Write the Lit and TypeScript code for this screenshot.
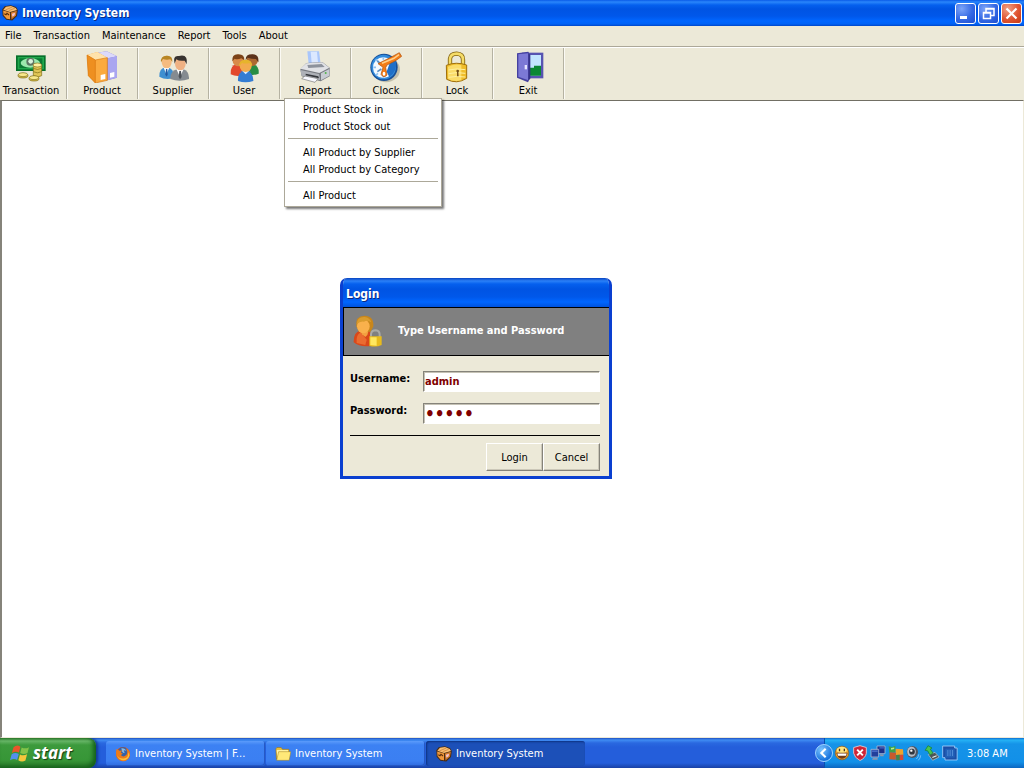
import { LitElement, html, svg, css, nothing } from "lit";
import { customElement, property } from "lit/decorators.js";

const icons: Record<string, unknown> = {
  crate: svg`
    <path d="M2 26 16 8 52 1 84 12 95 30 90 66 62 93 26 88 4 64Z" fill="#4a2c14"/>
    <path d="M8 28 24 11 54 6 82 18 90 30 48 42Z" fill="#f9bf72"/>
    <path d="M7 33 48 45 48 86 28 82 9 60Z" fill="#f0983a"/>
    <path d="M53 45 89 34 84 63 57 87Z" fill="#d07a2c"/>
    <path d="M20 30 62 12 M40 34 76 20" stroke="#c47a35" stroke-width="4"/>
    <path d="M14 52 24 58 30 50 42 60" stroke="#5a3010" stroke-width="7" fill="none"/>
    <path d="M60 52 78 46 76 62 62 70Z" fill="#f3c3cf"/>`,
  money: svg`
    <path d="M3 13H92V60H3Z" fill="#05702a"/>
    <path d="M8 18H87V55H8Z" fill="#20a84c"/>
    <path d="M13 22H82V51H13Z" fill="#0b7a34"/>
    <ellipse cx="46" cy="36" rx="29" ry="14" fill="#9be8ad"/>
    <circle cx="46" cy="32" r="12" fill="#5d7464"/><circle cx="47" cy="31" r="7" fill="#d9f2dc"/>
    <g stroke="#7c6b15" stroke-width="2">
      <path d="M55 42V74Q67 82 80 74V42Z" fill="#e0c555"/>
      <ellipse cx="67" cy="42" rx="13" ry="6" fill="#fff0a0"/>
      <path d="M55 52Q67 59 80 52M55 62Q67 69 80 62" fill="none"/>
      <ellipse cx="24" cy="74" rx="15" ry="7" fill="#dcc04c"/>
      <ellipse cx="24" cy="71" rx="14" ry="6" fill="#f8e88c"/>
      <ellipse cx="57" cy="83" rx="15" ry="7" fill="#dcc04c"/>
      <ellipse cx="57" cy="80" rx="14" ry="6" fill="#f8e88c"/>
    </g>`,
  boxes: svg`
    <path d="M34 5 62 1 93 16 93 80 64 88 40 60Z" fill="#7f78d2"/>
    <path d="M34 5 62 1 93 16 66 22Z" fill="#dcd9fb"/>
    <path d="M64 22 93 16V80L64 88Z" fill="#aaa6f0"/>
    <path d="M3 12 34 3 64 20V88L28 96 7 74Z" fill="#fbaa3f"/>
    <path d="M3 12 34 3 64 20 28 27Z" fill="#ffe2ab"/>
    <path d="M3 12 28 27V96L7 74Z" fill="#ee8f20"/>
    <path d="M3 12 28 27V96L7 74ZM28 27 64 20V88L28 96" fill="none" stroke="#d9780f" stroke-width="2"/>
    <path d="M44 72 58 69V84L44 87Z M72 66 85 63V77L72 80Z" fill="#fff"/>`,
  partners: svg`
    <path d="M7 77Q6 52 26 49Q45 50 49 65L46 82Q24 87 7 77Z" fill="#3f8fd0"/>
    <path d="M20 50 28 70 37 50Z" fill="#fff"/><path d="M27 54 31 54 32 72 28 77 25 70Z" fill="#2459a0"/>
    <ellipse cx="29" cy="33" rx="15" ry="19" fill="#f5bb80"/>
    <path d="M12 34Q10 13 30 14Q47 13 46 33L40 25Q28 28 18 24Z" fill="#b88625"/>
    <path d="M40 84Q39 60 62 54H78Q97 60 96 84Q68 94 40 84Z" fill="#858b91"/>
    <path d="M58 54 69 78 80 54Z" fill="#fff"/><path d="M67 60H72L74 78 69 85 65 77Z" fill="#4d5258"/>
    <ellipse cx="70" cy="38" rx="16" ry="20" fill="#efb183"/>
    <path d="M53 38Q46 12 66 15Q94 8 89 40L83 29Q66 31 58 25Z" fill="#37322f"/>`,
  people: svg`
    <path d="M8 70Q6 43 26 40Q48 41 48 71Q28 80 8 70Z" fill="#e2492d"/>
    <circle cx="31" cy="29" r="17" fill="#d88a49"/>
    <path d="M13 31Q11 8 32 10Q50 10 49 28L40 22Q28 27 20 23Z" fill="#7b4217"/>
    <path d="M52 68Q53 41 72 39Q94 42 92 68Q74 76 52 68Z" fill="#288d43"/>
    <circle cx="73" cy="28" r="17" fill="#ad6932"/>
    <path d="M53 28Q52 9 74 10Q94 10 91 34L84 24Q70 24 59 20Z" fill="#5b321a"/>
    <path d="M30 90Q28 62 52 58Q77 62 76 90Q52 98 30 90Z" fill="#347cd3"/>
    <path d="M43 60 53 70 63 60Z" fill="#d8eaff"/>
    <circle cx="53" cy="45" r="18" fill="#f2ab4e"/>
    <path d="M34 46Q32 25 54 26Q74 26 72 46L64 36Q50 40 42 35Z" fill="#e6b42c"/>`,
  printer: svg`
    <path d="M25 1H60L65 40H29Z" fill="#a9c6fb"/><path d="M35 2H54L57 36H38Z" fill="#dbe8ff"/>
    <path d="M4 55 22 36 70 33 92 50V76L65 91 8 76Z" fill="#777a80"/>
    <path d="M4 53 22 37 70 34 91 50 61 66Z" fill="#e1e2e6"/>
    <path d="M25 42 68 39 77 48 28 51Z" fill="#8d929c"/>
    <path d="M4 57 60 69 64 88 8 74Z" fill="#aeb1b8"/>
    <path d="M66 67 91 54V74L66 88Z" fill="#c8cbd2"/>
    <path d="M20 68 58 76 60 82 20 73Z" fill="#35373d"/>
    <path d="M18 75 57 83 48 94 8 83Z" fill="#f7f8ff" stroke="#777" stroke-width="2"/>
    <circle cx="80" cy="66" r="3" fill="#53b34b"/>`,
  clock: svg`
    <ellipse cx="48" cy="56" rx="42" ry="38" fill="#a5a18e" opacity=".6"/>
    <circle cx="42" cy="49" r="41" fill="#174f98"/>
    <circle cx="41" cy="48" r="37" fill="#328bdc"/>
    <circle cx="40" cy="50" r="31" fill="#f4f9ff"/>
    <path d="M60 34 78 30Q82 62 58 78L50 62Z" fill="#1f6fc8"/>
    <path d="M40 19V26M40 72V80M10 49H18M17 25 24 31M17 73 24 67" stroke="#8fc0f0" stroke-width="5"/>
    <path d="M22 30 36 42M22 62 34 54" fill="none" stroke="#5990c5" stroke-width="5"/>
    <path d="M24 38 64 18 88 5 95 16 77 29 51 42 47 50 51 72Q41 83 33 70L39 49Z" fill="#f47c16" stroke="#ad4e09" stroke-width="2"/>
    <path d="M36 37 72 22 87 11" fill="none" stroke="#ffd08a" stroke-width="5"/>
    <ellipse cx="42" cy="68" rx="4" ry="6" fill="#fff"/>`,
  lock: svg`
    <path d="M27 44V23Q29 8 47 8Q66 9 66 26V43" fill="none" stroke="#80600e" stroke-width="13"/>
    <path d="M27 44V23Q29 8 47 8Q66 9 66 26V43" fill="none" stroke="#f5dc68" stroke-width="8"/>
    <path d="M16 43Q45 31 77 42V82Q47 101 17 85Z" fill="#efbd2b" stroke="#a0700b" stroke-width="3"/>
    <path d="M21 47Q45 37 61 43V88Q37 94 21 83Z" fill="#fbdc69"/>
    <path d="M23 57Q46 51 73 56M23 68Q46 62 73 67M23 79Q46 74 73 78" fill="none" stroke="#fff0a0" stroke-width="3"/>
    <circle cx="50" cy="60" r="4" fill="#765016"/><path d="M48 62H52L53 76H48Z" fill="#765016"/>`,
  door: svg`
    <path d="M30 5H94V82H30Z" fill="#5754b1"/><path d="M38 12H87V74H38Z" fill="#c2e5ff"/>
    <path d="M50 50H66V44H87V74H50Z" fill="#0b8734"/>
    <path d="M15 7 49 2 54 12V82L48 94 15 80Z" fill="#4541a0"/>
    <path d="M19 10 49 7V88L19 77Z" fill="#7c79d6"/>
    <path d="M49 7 55 12V83L49 88Z" fill="#35328a"/>
    <path d="M38 42H45V55H38Z" fill="#e5e4ff"/>`,
  userlock: svg`
    <path d="M5 82Q4 50 26 47H50Q62 52 60 92Q24 98 5 82Z" fill="#d9481a"/>
    <path d="M14 84Q11 60 26 52L44 74 40 90Z" fill="#ea6c30"/>
    <path d="M24 46H50L46 60 40 66 30 58Z" fill="#f3a141"/>
    <path d="M13 34Q9 3 37 2Q66 2 64 34L56 50 22 50Z" fill="#c8861b"/>
    <ellipse cx="34" cy="34" rx="19" ry="21" fill="#f9b14c"/>
    <path d="M14 28Q15 5 38 6Q54 8 58 22Q46 14 36 20Q24 18 14 28Z" fill="#d99c2e"/>
    <path d="M57 66V57Q59 46 71 46Q83 47 83 59V67" fill="none" stroke="#a9aaa6" stroke-width="6"/>
    <path d="M52 64H89V90Q70 98 52 92Z" fill="#e8bb1c"/><path d="M55 67H74V92L55 90Z" fill="#ffe75e"/>`,
  firefox: svg`
    <circle cx="48" cy="48" r="42" fill="#d74e13"/><circle cx="48" cy="38" r="30" fill="#3261a9"/>
    <path d="M38 14Q61 12 69 32Q59 23 52 28L59 39Q49 45 43 35Z" fill="#89b9e1"/>
    <path d="M8 18 28 28 44 27 34 39 47 47 35 54Q49 72 69 53Q80 37 65 14Q94 28 90 55Q80 92 45 91Q6 83 6 45Z" fill="#ed7b1b"/>
    <path d="M10 54Q30 83 58 73Q82 69 79 38Q95 58 75 77Q36 103 10 54Z" fill="#f9c13e"/>`,
  folder: svg`
    <path d="M5 17 12 9H37L45 20H84V78H9Z" fill="#e8bd3c" stroke="#8f6b15" stroke-width="3"/>
    <path d="M10 24H79V72H14Z" fill="#fff2a1"/>
    <path d="M22 34H95L85 86H10Z" fill="#ffe878" stroke="#a37f1b" stroke-width="3"/>`,
  windows: svg`
    <path d="M17 20Q34 6 50 18L43 46Q27 36 9 48Z" fill="#e9552b"/>
    <path d="M56 21Q73 31 91 20L84 48Q67 57 49 48Z" fill="#83c34a"/>
    <path d="M8 54Q25 43 42 53L34 82Q19 72 0 83Z" fill="#5290ee"/>
    <path d="M48 55Q64 64 82 54L74 84Q57 94 40 83Z" fill="#f4c63c"/>`,
  chevron: svg`<path d="M58 22 32 48 58 74" fill="none" stroke="#fff" stroke-width="13"/>`,
  smile: svg`
    <circle cx="48" cy="48" r="41" fill="#f3a529" stroke="#8c561b" stroke-width="4"/>
    <ellipse cx="47" cy="30" rx="31" ry="19" fill="#ffe680"/>
    <path d="M33 22V38M62 22V38" stroke="#4d3213" stroke-width="8"/>
    <path d="M14 47H82Q76 82 48 83Q20 82 14 47Z" fill="#713c19"/><path d="M20 51H76L72 64H24Z" fill="#fff"/>`,
  shield: svg`
    <path d="M48 4 86 15V50Q80 79 48 93Q15 77 10 49V15Z" fill="#cf2537" stroke="#ead3d5" stroke-width="5"/>
    <path d="M31 28 65 62M65 28 31 62" stroke="#fff" stroke-width="12"/>`,
  network: svg`
    <g stroke="#a9b9d4" stroke-width="5"><path d="M42 6H90V52H42Z" fill="#1d2f86"/><path d="M6 26H52V72H6Z" fill="#22409c"/></g>
    <path d="M18 76H46V88H12Z" fill="#8c98b0"/><path d="M58 56H82V68H62Z" fill="#8c98b0"/>
    <path d="M12 32H46V42H12Z" fill="#4668c4"/><path d="M56 12H84V22H56Z" fill="#3d56b4"/>`,
  blocks: svg`
    <path d="M4 8 26 12 44 4 46 44 8 46Z" fill="#3ca249"/><path d="M46 22 90 26 92 58 46 60Z" fill="#efa22b"/>
    <path d="M10 44 48 46 46 88 8 86Z" fill="#c85a2c"/><path d="M48 60 92 58V90L50 92Z" fill="#d74932"/>
    <path d="M48 60 70 59V90L50 92Z" fill="#3a8a50"/><path d="M18 18 37 15V24L19 28Z" fill="#b8e98c"/>`,
  speaker: svg`
    <ellipse cx="38" cy="42" rx="34" ry="36" fill="#4f5661"/><ellipse cx="33" cy="40" rx="26" ry="30" fill="#b6bcc6"/>
    <circle cx="36" cy="40" r="17" fill="#30363f"/><circle cx="32" cy="34" r="7" fill="#fff"/>
    <path d="M76 56Q76 73 62 84M88 62Q87 80 74 92" fill="none" stroke="#8cc8f8" stroke-width="5"/>`,
  eject: svg`
    <path d="M26 58 66 44 91 72 52 92Z" fill="#4c5558" stroke="#c2c9cf" stroke-width="4"/>
    <path d="M7 32 24 4 48 18 38 25 54 48 36 60 22 35Z" fill="#48c551" stroke="#167c2b" stroke-width="4"/>
    <path d="M50 75 76 64" stroke="#e9eef1" stroke-width="7"/>`,
  chip: svg`
    <path d="M4 6H76V18H91V90H18V76H4Z" fill="#1b4fa6" stroke="#a5d0fb" stroke-width="5"/>
    <path d="M20 22H76V76H20Z" fill="#2260b8"/>
    <path d="M32 36H66M32 48H66M32 60H66" stroke="#8fc8ff" stroke-width="5" stroke-dasharray="6 8"/>`,
};

@customElement("app-icon")
class AppIcon extends LitElement {
  @property() name = "";
  static styles = css`
    :host { display: block; width: 16px; height: 16px; flex: none; }
    svg { display: block; width: 100%; height: 100%; }
  `;
  render() {
    return html`<svg viewBox="0 0 96 96" aria-hidden="true">${icons[this.name]}</svg>`;
  }
}

const menus = ["File", "Transaction", "Maintenance", "Report", "Tools", "About"];
const tools = [
  ["Transaction", "money"], ["Product", "boxes"], ["Supplier", "partners"], ["User", "people"],
  ["Report", "printer"], ["Clock", "clock"], ["Lock", "lock"], ["Exit", "door"],
];
const reports = [
  ["Product Stock in", "Product Stock out"],
  ["All Product by Supplier", "All Product by Category"],
  ["All Product"],
];
const tasks = [["Inventory System | F...", "firefox"], ["Inventory System", "folder"], ["Inventory System", "crate"]];
const tray = ["smile", "shield", "network", "blocks", "speaker", "eject", "chip"];

@customElement("app-root")
class AppRoot extends LitElement {
  static styles = css`
    :host {
      display: flex; flex-direction: column; height: 100vh; overflow: hidden;
      font-family: "DejaVu Sans Condensed", "DejaVu Sans", sans-serif;
      font-size: 11px; line-height: 15px; color: #000; background: #ece9d8;
    }
    * { box-sizing: border-box; }
    button { font: inherit; color: inherit; border: 0; background: none; padding: 0; margin: 0; white-space: nowrap; }
    .title {
      display: flex; align-items: center; gap: 4px; height: 26px; flex: none; padding: 0 2px;
      background: linear-gradient(#0a5be8 0, #2a86fb 2px, #0560ee 5px, #0054e3 9px, #0057ea 16px, #0066ff 21px, #0062f5 24px, #0046c8);
    }
    .title h1, .login h2 {
      flex: 1; margin: 0; font: bold 12px/18px "DejaVu Sans Condensed", "DejaVu Sans", sans-serif;
      color: #fff; text-shadow: 1px 1px #0a2a80;
    }
    .controls { display: flex; gap: 2px; }
    .control {
      width: 21px; height: 21px; border: 1px solid #fff; border-radius: 3px;
      background: radial-gradient(circle at 30% 25%, #7ca4f8, #3468e4 55%, #1c4ed0);
    }
    .close { background: radial-gradient(circle at 30% 25%, #f0a085, #e05532 55%, #c53a14); }
    .control svg { display: block; width: 19px; height: 19px; }
    .menubar { display: flex; height: 20px; flex: none; padding: 0 5px 2px; gap: 12px; align-items: center; }
    .toolbar {
      display: flex; height: 54px; flex: none; border-top: 1px solid #aca899; box-shadow: inset 0 1px #fff;
      padding-top: 1px; position: relative; z-index: 2;
    }
    .tool { width: 71px; height: 51px; border-right: 1px solid #b5b2a2; box-shadow: 1px 0 #fbfaf4; }
    .tool:first-child { width: 67px; }
    .tool > button { display: flex; flex-direction: column; align-items: center; width: 100%; padding-top: 3px; }
    .tool:first-child > button { width: 62px; }
    .tool app-icon { width: 32px; height: 32px; }
    .anchor { position: relative; z-index: 1; }
    .popup {
      position: absolute; top: 100%; left: 4px; width: 158px; padding: 2px 3px; margin-top: -1px;
      background: #fff; border: 1px solid #aca899; box-shadow: 2px 2px 2px #0008;
    }
    .popup button { display: block; width: 100%; height: 17px; padding-left: 15px; text-align: left; }
    .popup hr { height: 1px; border: 0; margin: 3px 0 5px; background: #aca899; }
    .workspace { flex: 1; background: #fff; border: 1px solid #716f64; border-left: 2px solid #85837a; border-right-color: #ece9d8; border-bottom-color: #ece9d8; position: relative; }
    .login {
      position: absolute; left: 338px; top: 177px; width: 272px; border: 3px solid #0a3fd0; border-top: 0;
      border-radius: 7px 7px 0 0; background: #ece9d8; overflow: hidden;
    }
    .login h2 { height: 29px; padding: 7px 3px 0; margin: 0; background: linear-gradient(#0843c0 0, #2a80f8 3px, #0560ee 6px, #0054e3 11px, #0058ea 19px, #0066ff 24px, #0052dc); }
    .banner {
      display: flex; align-items: center; height: 49px; padding: 0 0 2px 8px; gap: 14px;
      background: #808080; border: 1px solid #000; border-width: 1px 0 1px 1px; color: #fff; font-weight: bold;
    }
    .banner app-icon { width: 32px; height: 32px; }
    .form { padding: 15px 9px 5px 7px; }
    .fields { display: grid; grid-template-columns: 73px 1fr; gap: 11px 0; align-items: start; padding-bottom: 11px; border-bottom: 1px solid #000; }
    .fields label { font-weight: bold; }
    .fields input {
      width: 100%; height: 21px; margin: 0; padding: 0 1px; border: 1px solid #fff; border-top-color: #85837a; border-left-color: #85837a;
      box-shadow: inset 1px 1px #c5c2b5; background: #fff; color: #800000; font: inherit; font-weight: bold; outline: none;
    }
    .fields input[type="password"] { font-size: 17px; }
    .actions { display: flex; justify-content: flex-end; padding-top: 7px; }
    .actions button {
      width: 57px; height: 28px; border: 1px solid #fff; border-right-color: #85837a; border-bottom-color: #85837a;
      box-shadow: inset -1px -1px #cbc7b8;
    }
    .taskbar {
      display: flex; height: 30px; flex: none; color: #fff;
      background: linear-gradient(#1f4fc0 0, #3f8cf3 2px, #2a68e0 5px, #245edb 9px, #245edb 25px, #1941a5);
    }
    .start {
      display: flex; align-items: center; gap: 3px; width: 96px; padding-left: 10px; margin-right: 10px;
      border-radius: 0 8px 8px 0; box-shadow: inset -3px -2px 4px #14601a, 2px 0 3px #123a90;
      background: linear-gradient(#2c7a2c 0, #66b566 3px, #3c9a3c 7px, #379637 22px, #2b7c2b);
      font: italic bold 17px/24px "Noto Sans", sans-serif; text-shadow: 1px 1px 1px #143c14;
    }
    .start app-icon { width: 20px; height: 20px; }
    .tasks { display: flex; flex: 1; align-items: center; gap: 1px; padding-top: 1px; min-width: 0; }
    .task {
      display: flex; align-items: center; gap: 4px; width: 159px; height: 25px; padding-left: 9px; border-radius: 3px;
      background: linear-gradient(#5b9bfb, #3c81f3 4px, #3b7ff2 20px, #2f6ade); box-shadow: inset -1px -1px #2659c4;
    }
    .active { padding-left: 10px; background: #1c50b8; box-shadow: inset 1px 1px 2px #0d3180; }
    .tray {
      display: flex; align-items: center; width: 200px; padding-left: 9px; gap: 2px; border-left: 1px solid #0a4fae;
      background: linear-gradient(#0e6cd0 0, #25b2f5 2px, #1593e8 6px, #1290e8 24px, #0c66c0); position: relative;
    }
    .expand {
      position: absolute; left: -10px; top: 6px; width: 18px; height: 18px; border-radius: 50%; border: 1px solid #9fd4ff;
      background: radial-gradient(circle at 35% 30%, #7cc4ff, #1672dd 70%);
    }
    .tray time { margin-left: 7px; }
  `;

  render() {
    return html`
      <header class="title">
        <app-icon name="crate"></app-icon>
        <h1>Inventory System</h1>
        <div class="controls">
          <button class="control" aria-label="Minimize"><svg viewBox="0 0 19 19"><path d="M4 12h7v3H4z" fill="#fff"/></svg></button>
          <button class="control" aria-label="Restore"><svg viewBox="0 0 19 19"><path d="M7 8V4.500h8v7h-3M4.500 8.500h7v6h-7zM4 9h8M7 5h8" fill="none" stroke="#fff" stroke-width="1.500"/></svg></button>
          <button class="control close" aria-label="Close"><svg viewBox="0 0 19 19"><path d="M4.500 4.500l10 10M14.500 4.500l-10 10" stroke="#fff" stroke-width="2.200"/></svg></button>
        </div>
      </header>
      <nav class="menubar" aria-label="Main menu">${menus.map((m) => html`<button>${m}</button>`)}</nav>
      <nav class="toolbar" aria-label="Tools">
        ${tools.map(([label, icon]) => html`
          <div class="tool ${label === "Report" ? "anchor" : ""}">
            <button><app-icon name=${icon}></app-icon>${label}</button>
            ${label === "Report" ? this.renderPopup() : nothing}
          </div>`)}
      </nav>
      <main class="workspace">${this.renderLogin()}</main>
      <footer class="taskbar">
        <button class="start"><app-icon name="windows"></app-icon>start</button>
        <div class="tasks">
          ${tasks.map(([label, icon], i) => html`
            <button class="task ${i === 2 ? "active" : ""}"><app-icon name=${icon}></app-icon>${label}</button>`)}
        </div>
        <div class="tray">
          <button class="expand" aria-label="Show hidden icons"><app-icon name="chevron"></app-icon></button>
          ${tray.map((n) => html`<app-icon name=${n}></app-icon>`)}
          <time datetime="03:08">3:08 AM</time>
        </div>
      </footer>`;
  }

  private renderPopup() {
    return html`<div class="popup" role="menu">
      ${reports.map((group, i) => html`${i ? html`<hr />` : nothing}${group.map((r) => html`<button role="menuitem">${r}</button>`)}`)}
    </div>`;
  }

  private renderLogin() {
    return html`<section class="login" role="dialog" aria-labelledby="login-title">
      <h2 id="login-title">Login</h2>
      <div class="banner"><app-icon name="userlock"></app-icon>Type Username and Password</div>
      <form class="form" @submit=${(e: Event) => e.preventDefault()}>
        <div class="fields">
          <label for="username">Username:</label><input id="username" type="text" value="admin" />
          <label for="password">Password:</label><input id="password" type="password" value="admin" />
        </div>
        <div class="actions"><button type="submit">Login</button><button type="button">Cancel</button></div>
      </form>
    </section>`;
  }
}
